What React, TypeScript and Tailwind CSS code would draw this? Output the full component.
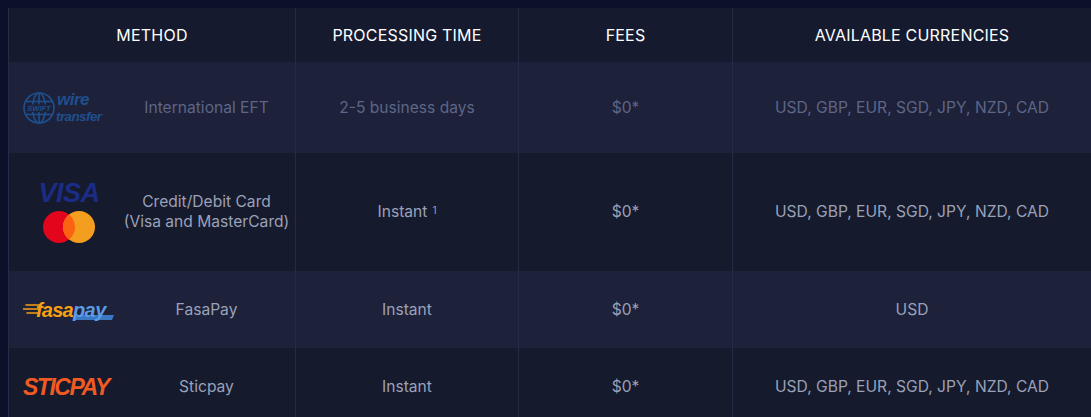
import type { ReactNode } from 'react'

const FONT = { fontFamily: 'Inter, "Noto Sans", sans-serif' }
const LOGO_FONT = '"Liberation Sans", Arial, sans-serif'

function WireLogo() {
  return (
    <svg width="92" height="34" viewBox="0 0 92 34">
      <g stroke="#1f4f8c" strokeWidth="1.6" fill="none">
        <circle cx="16" cy="17" r="15" />
        <ellipse cx="16" cy="17" rx="6.5" ry="15" />
        <line x1="16" y1="2" x2="16" y2="32" />
        <line x1="2.5" y1="10.5" x2="29.5" y2="10.5" />
        <line x1="2.5" y1="23.5" x2="29.5" y2="23.5" />
      </g>
      <rect x="3" y="13.5" width="26" height="7.5" fill="#1d2139" />
      <text x="16" y="20" textAnchor="middle" fontSize="7.5" fontWeight="700" fill="#1f4f8c" fontFamily={LOGO_FONT} fontStyle="italic">SWIFT</text>
      <text x="34" y="14" fontSize="17" fontWeight="700" fill="#1f4f8c" fontFamily={LOGO_FONT} fontStyle="italic" letterSpacing="-0.5">wire</text>
      <text x="33" y="30" fontSize="13.5" fontWeight="700" fill="#1f4f8c" fontFamily={LOGO_FONT} fontStyle="italic" letterSpacing="-0.6">transfer</text>
    </svg>
  )
}

function CardLogos() {
  return (
    <div className="flex flex-col items-center gap-[5px] w-[92px]">
      <span
        className="text-[27px] leading-[24px] font-black italic text-[#1b2c86] tracking-[-0.5px]"
        style={{ fontFamily: LOGO_FONT }}
      >
        VISA
      </span>
      <svg width="54" height="34" viewBox="0 0 54 34">
        <circle cx="17" cy="17" r="16" fill="#e3051b" />
        <circle cx="37" cy="17" r="16" fill="#f39e1e" />
        <path d="M27 4.5 A16 16 0 0 1 27 29.5 A16 16 0 0 1 27 4.5 Z" fill="#fb6212" />
      </svg>
    </div>
  )
}

function FasaLogo() {
  return (
    <svg width="92" height="26" viewBox="0 0 92 26">
      <g stroke="#f5a012" strokeWidth="1.6" strokeLinecap="round">
        <line x1="3" y1="8" x2="17" y2="8" />
        <line x1="0" y1="12" x2="16" y2="12" />
        <line x1="4" y1="16" x2="15" y2="16" />
      </g>
      <text x="13" y="20" fontSize="20" fontWeight="900" fill="#f5a012" fontFamily={LOGO_FONT} fontStyle="italic" letterSpacing="-0.8">fasa</text>
      <path d="M52 18 L91 18 L89 23 L50 23 Z" fill="#3b78c4" />
      <text x="50" y="20" fontSize="20" fontWeight="700" fill="#5b9be6" fontFamily={LOGO_FONT} fontStyle="italic" letterSpacing="-0.6">pay</text>
    </svg>
  )
}

function SticLogo() {
  return (
    <span
      className="text-[23px] leading-[24px] font-black italic text-[#f15a22] tracking-[-1.5px]"
      style={{ fontFamily: LOGO_FONT }}
    >
      STICPAY
    </span>
  )
}

type Row = {
  logo: ReactNode
  name: ReactNode
  time: ReactNode
  currencies: string
  height: string
  bg: string
  text: string
}

const CUR = 'USD, GBP, EUR, SGD, JPY, NZD, CAD'

const ROWS: Row[] = [
  {
    logo: <WireLogo />,
    name: 'International EFT',
    time: '2-5 business days',
    currencies: CUR,
    height: 'h-[91px]',
    bg: 'bg-[#1d2139]',
    text: 'text-[#5d6687]',
  },
  {
    logo: <CardLogos />,
    name: (
      <>
        Credit/Debit Card
        <br />
        (Visa and MasterCard)
      </>
    ),
    time: (
      <>
        Instant<sup className="ml-[5px] text-[10px] relative -top-[2px]">1</sup>
      </>
    ),
    currencies: CUR,
    height: 'h-[118px]',
    bg: 'bg-[#151a2d]',
    text: 'text-[#9ba1b8]',
  },
  {
    logo: <FasaLogo />,
    name: 'FasaPay',
    time: 'Instant',
    currencies: 'USD',
    height: 'h-[77px]',
    bg: 'bg-[#1d2139]',
    text: 'text-[#9ba1b8]',
  },
  {
    logo: <SticLogo />,
    name: 'Sticpay',
    time: 'Instant',
    currencies: CUR,
    height: 'h-[77px]',
    bg: 'bg-[#151a2d]',
    text: 'text-[#9ba1b8]',
  },
]

const COLS = 'grid grid-cols-[287px_223px_214px_1fr]'
const HEAD = ['METHOD', 'PROCESSING TIME', 'FEES', 'AVAILABLE CURRENCIES']

export default function App() {
  return (
    <div className="min-h-screen bg-[#0b1129] pt-[8px] pl-[8px]" style={FONT}>
      <div className="border-l border-[#262c48] bg-[#151a2d]">
        {/* header */}
        <div className={`${COLS} h-[54px] bg-[#161a2f]`}>
          {HEAD.map((h, i) => (
            <div
              key={h}
              className={`flex items-center justify-center text-[16px] font-normal tracking-[0.2px] text-white ${i < 3 ? 'border-r border-[#262b45]' : ''}`}
            >
              {h}
            </div>
          ))}
        </div>

        {/* rows */}
        {ROWS.map((r, idx) => (
          <div key={idx} className={`${COLS} ${r.height} ${r.bg} ${r.text} text-[15.6px] leading-[20px]`}>
            <div className="flex items-center border-r border-[#262b45]">
              <div className="w-[109px] pl-[14px] flex items-center">{r.logo}</div>
              <div className="flex-1 text-center">{r.name}</div>
            </div>
            <div className="flex items-center justify-center border-r border-[#262b45]">{r.time}</div>
            <div className="flex items-center justify-center border-r border-[#262b45]">$0*</div>
            <div className="flex items-center justify-center">{r.currencies}</div>
          </div>
        ))}
      </div>
    </div>
  )
}
